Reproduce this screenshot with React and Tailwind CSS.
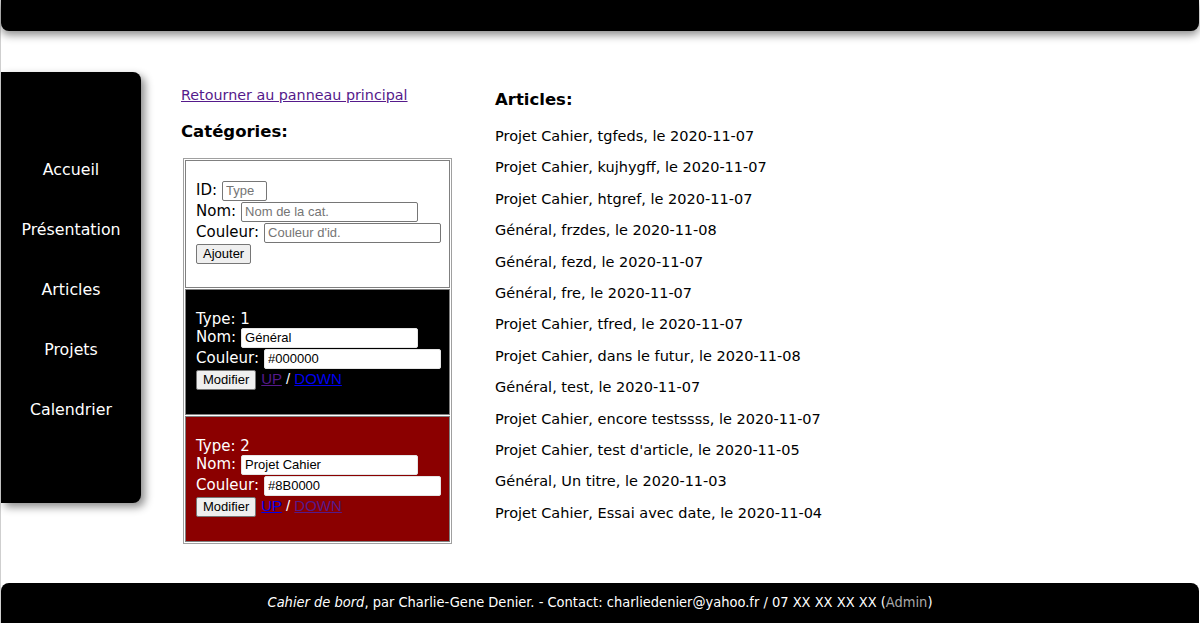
import React from 'react';

const articles = [
  'Projet Cahier, tgfeds, le 2020-11-07',
  'Projet Cahier, kujhygff, le 2020-11-07',
  'Projet Cahier, htgref, le 2020-11-07',
  'Général, frzdes, le 2020-11-08',
  'Général, fezd, le 2020-11-07',
  'Général, fre, le 2020-11-07',
  'Projet Cahier, tfred, le 2020-11-07',
  'Projet Cahier, dans le futur, le 2020-11-08',
  'Général, test, le 2020-11-07',
  'Projet Cahier, encore testssss, le 2020-11-07',
  "Projet Cahier, test d'article, le 2020-11-05",
  'Général, Un titre, le 2020-11-03',
  'Projet Cahier, Essai avec date, le 2020-11-04',
];

const navItems = ['Accueil', 'Présentation', 'Articles', 'Projets', 'Calendrier'];

const inputCls =
  "h-[20px] border border-[#767676] rounded-[2px] bg-white px-[3px] text-[13px] text-black font-['Liberation_Sans',Arial,sans-serif] placeholder:text-[#757575] outline-none";

const btnCls =
  "h-[20px] px-[6px] border border-[#767676] rounded-[2px] bg-[#efefef] text-[13px] text-black font-['Liberation_Sans',Arial,sans-serif] leading-none";

const CategoryCell = ({ type, nom, couleur, bg, upVisited }) => (
  <div className={`h-[126px] border border-[#808080] ${bg} text-white pt-[21px] px-[10px] text-[15px]`}>
    <div className="h-[16px] leading-[16px]">Type: {type}</div>
    <div className="h-[21px] flex items-center gap-[5px]">
      <span>Nom:</span>
      <input className={`${inputCls} w-[177px] border-[#e5e5e5]`} defaultValue={nom} />
    </div>
    <div className="h-[21px] flex items-center gap-[5px]">
      <span>Couleur:</span>
      <input className={`${inputCls} w-[177px] border-[#e5e5e5]`} defaultValue={couleur} />
    </div>
    <div className="h-[21px] flex items-center gap-[5px]">
      <button className={btnCls}>Modifier</button>
      <span className="font-['Liberation_Sans',Arial,sans-serif] text-[15px]">
        <a href="#" className={`underline ${upVisited ? 'text-[#551a8b]' : 'text-[#0000ee]'}`}>UP</a>
        {' / '}
        <a href="#" className={`underline ${upVisited ? 'text-[#0000ee]' : 'text-[#551a8b]'}`}>DOWN</a>
      </span>
    </div>
  </div>
);

export default function App() {
  return (
    <div className="min-h-screen bg-white border-l border-[#cfcfcf] flex flex-col font-['DejaVu_Sans',Verdana,sans-serif] text-black">
      {/* Header */}
      <header className="h-[31px] mr-[1px] bg-black rounded-b-[8px] shadow-[0_4px_8px_rgba(0,0,0,0.45)]"></header>

      <div className="flex mt-[41px]">
        {/* Sidebar */}
        <nav className="w-[140px] h-[431px] bg-black rounded-r-[8px] shadow-[4px_4px_8px_rgba(0,0,0,0.45)] pt-[68px] flex flex-col shrink-0">
          {navItems.map((item) => (
            <a key={item} href="#" className="h-[60px] leading-[60px] text-center text-white text-[15.8px]">
              {item}
            </a>
          ))}
        </nav>

        {/* Categories column */}
        <div className="ml-[40px] w-[272px] pt-[14px]">
          <a href="#" className="text-[14.3px] text-[#551a8b] underline leading-[18px] block">
            Retourner au panneau principal
          </a>
          <h2 className="font-bold text-[16.5px] mt-[18px] leading-[20px]">Catégories:</h2>
          <div className="mt-[16px] ml-[2px] w-[269px] border border-[#a0a0a0] p-px flex flex-col gap-px">
            <div className="h-[128px] border border-[#808080] bg-white pt-[19px] px-[10px] text-[15px]">
              <div className="h-[21px] flex items-center gap-[5px]">
                <span>ID:</span>
                <input className={`${inputCls} w-[45px]`} placeholder="Type" />
              </div>
              <div className="h-[21px] flex items-center gap-[5px]">
                <span>Nom:</span>
                <input className={`${inputCls} w-[177px]`} placeholder="Nom de la cat." />
              </div>
              <div className="h-[21px] flex items-center gap-[5px]">
                <span>Couleur:</span>
                <input className={`${inputCls} w-[177px]`} placeholder="Couleur d'id." />
              </div>
              <div className="h-[21px] flex items-center">
                <button className={btnCls}>Ajouter</button>
              </div>
            </div>
            <CategoryCell type="1" nom="Général" couleur="#000000" bg="bg-black" upVisited />
            <CategoryCell type="2" nom="Projet Cahier" couleur="#8B0000" bg="bg-[#8b0000]" />
          </div>
        </div>

        {/* Articles column */}
        <div className="ml-[42px] pt-[18px]">
          <h2 className="font-bold text-[16.5px] leading-[20px]">Articles:</h2>
          <ul className="mt-[17px]">
            {articles.map((a) => (
              <li key={a} className="h-[31.4px] leading-[18px] text-[14.5px]">
                {a}
              </li>
            ))}
          </ul>
        </div>
      </div>

      {/* Footer */}
      <footer className="mt-auto h-[40px] mr-[1px] bg-black rounded-t-[8px] flex items-center justify-center text-white text-[14.5px] font-['DejaVu_Sans_Condensed','DejaVu_Sans',sans-serif]">
        <span>
          <i>Cahier de bord</i>, par Charlie-Gene Denier. - Contact: charliedenier@yahoo.fr / 07 XX XX XX XX (
          <a href="#" className="text-[#a9a9a9]">Admin</a>)
        </span>
      </footer>
    </div>
  );
}
